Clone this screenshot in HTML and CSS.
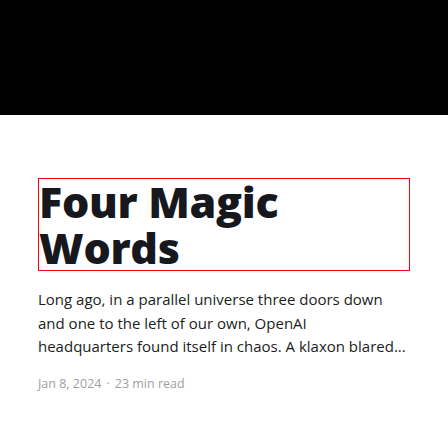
FILE: index.html
```html
<!DOCTYPE html>
<html>
<head>
<meta charset="utf-8">
<link rel="stylesheet" href="styles.css">
</head>
<body>
<div class="hero"></div>
<article class="post">
  <h1 class="title">Four Magic Words</h1>
  <p class="excerpt">Long ago, in a parallel universe three doors down<br>and one to the left of our own, OpenAI<br>headquarters found itself in chaos. A klaxon blared...</p>
  <div class="meta"><span>Jan 8, 2024</span><span class="dot">·</span><span>23 min read</span></div>
</article>
</body>
</html>
```
FILE: styles.css
```css
html, body { margin: 0; padding: 0; background: #fff; }
body { font-family: "Open Sans", "Noto Sans", sans-serif; }
.hero { height: 115px; background: #000; }
.post { padding: 63px 38px 0 38px; }
.title {
  margin: 0;
  border: 1px solid #ff0000;
  font-size: 43px;
  line-height: 45.5px;
  font-weight: 800;
  color: #16181d;
  padding-right: 120px;
  letter-spacing: -0.3px;
}
.excerpt {
  margin: 17px 0 0 0;
  font-size: 15px;
  line-height: 23.5px;
  color: #1b1d22;
}
.meta {
  margin-top: 16px;
  font-size: 12.5px;
  color: #a0a0a0;
  display: flex;
  gap: 5px;
}
```
